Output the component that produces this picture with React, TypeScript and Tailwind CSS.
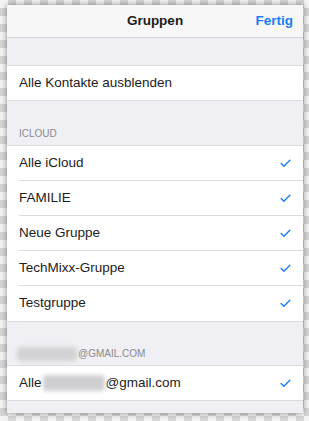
import { Check } from 'lucide-react'

const icloudGroups = ['Alle iCloud', 'FAMILIE', 'Neue Gruppe', 'TechMixx-Gruppe', 'Testgruppe']

function Tick () {
    return <Check className="text-[#1a7ef5]" size={13} strokeWidth={2.6} />
}

function Row ({ children, last }: { children: React.ReactNode, last?: boolean }) {
    return (
        <div className="flex h-[35px] bg-white pl-[12px]">
            <div className={`flex flex-1 items-center justify-between pr-[11px] ${last ? '' : 'border-b border-[#dcdcdf]'}`}>
                <p className="text-[13.5px] text-[#1c1c1c]">{children}</p>
                <Tick />
            </div>
        </div>
    )
}

function App () {
    return (
        <div
            className="w-[309px] h-[421px] pl-[7px] pt-[5px] bg-[repeating-conic-gradient(#d6d6d6_0_25%,#f4f4f4_0_50%)] bg-size-[16px_16px]"
            style={{ fontFamily: '"Liberation Sans", Arial, sans-serif' }}
        >
            <div className="flex flex-col w-[296px] h-[408px] bg-[#efeff4] shadow-[0_0_6px_rgba(0,0,0,0.45)] overflow-hidden">
                <header className="relative flex h-[33px] shrink-0 items-center justify-center bg-[#f7f7f7] border-b border-[#d4d4d8]">
                    <p className="text-[13.5px] font-semibold text-[#1c1c1c]">Gruppen</p>
                    <p className="absolute right-[10px] text-[13.5px] font-semibold text-[#1a7ef5]">Fertig</p>
                </header>

                <div className="h-[27px] shrink-0" />

                <div className="flex h-[36px] shrink-0 items-center bg-white pl-[12px] border-y border-[#dcdcdf]">
                    <p className="text-[13.5px] text-[#1c1c1c]">Alle Kontakte ausblenden</p>
                </div>

                <div className="flex h-[45px] shrink-0 items-end pl-[12px] pb-[4px] border-b border-[#dcdcdf]">
                    <p className="text-[10px] text-[#8a8a8f]">ICLOUD</p>
                </div>

                <div className="border-b border-[#dcdcdf]">
                    {icloudGroups.map((group, index) => (
                        <Row key={group} last={index === icloudGroups.length - 1}>{group}</Row>
                    ))}
                </div>

                <div className="flex h-[44px] shrink-0 items-end pl-[10px] pb-[4px] border-b border-[#dcdcdf]">
                    <span className="w-[60px] h-[14px] mr-[1px] bg-[#d2d2d4] blur-[2px] rounded-sm" />
                    <p className="text-[10px] text-[#8a8a8f]">@GMAIL.COM</p>
                </div>

                <div className="flex h-[35px] shrink-0 items-center justify-between bg-white pl-[12px] pr-[11px] border-b border-[#dcdcdf]">
                    <div className="flex items-center">
                        <p className="text-[13.5px] text-[#1c1c1c]">Alle</p>
                        <span className="w-[62px] h-[16px] mx-[1px] bg-[#cfcfd1] blur-[2px] rounded-sm" />
                        <p className="text-[13.5px] text-[#1c1c1c]">@gmail.com</p>
                    </div>
                    <Tick />
                </div>
            </div>
        </div>
    )
}

export default App
